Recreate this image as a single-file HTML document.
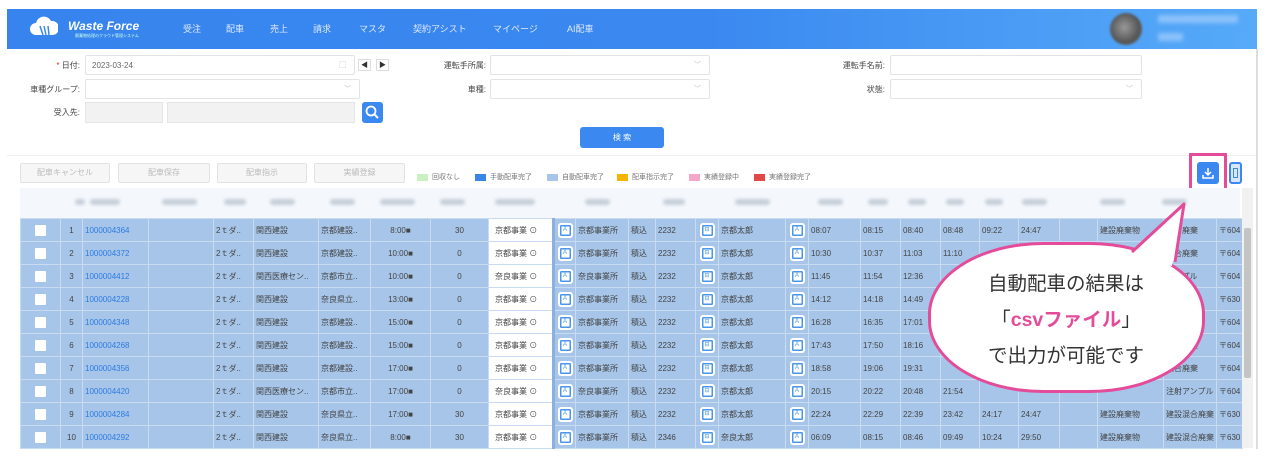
<!DOCTYPE html>
<html><head><meta charset="utf-8"><style>
*{margin:0;padding:0;box-sizing:border-box}
body{width:1275px;height:463px;background:#fff;font-family:"Liberation Sans","Noto Sans CJK JP",sans-serif;position:relative;overflow:hidden;color:#555}
.abs{position:absolute}
.hdr{left:7px;top:9px;width:1250px;height:40px;background:linear-gradient(90deg,#3784ee 0%,#3a88f0 55%,#56aaf8 100%)}
.nav{top:22px;font-size:9px;color:#dfeaff}
.lbl{font-size:8px;color:#444;text-align:right}
.inp{background:#fff;border:1px solid #e3e3e3;border-radius:2px}
.chev{position:absolute;right:8px;top:4px;font-size:7px;color:#bbb}
.btn{background:#f6f6f6;border:1px solid #e2e2e2;border-radius:2px;font-size:8px;color:#bbb;text-align:center;line-height:18px;top:163px;height:20px}
.lg{top:174px;width:11px;height:7px}
.lgt{top:172px;font-size:7px;color:#777}
table{position:absolute;left:20px;top:218px;border-collapse:collapse;table-layout:fixed;font-size:8px;color:#444}
td{height:23px;background:#a6c5e9;border:1px solid #c8dbf1;white-space:nowrap;overflow:hidden;padding:0 2px}
td.c{text-align:center}
td.id{color:#2e7be0}
td.w{background:#fff;border-right:3px solid #8ab0dd;font-size:8px;padding-left:6px}
.cb{display:inline-block;width:11px;height:11px;background:#fff;border-radius:1px;vertical-align:middle}
.ic{display:inline-block;width:15px;height:15px;background:#fff;border:2px solid #fff;box-shadow:inset 0 0 0 1.5px #4a95ee;border-radius:3px;vertical-align:middle;font-size:6px;color:#4a95ee;line-height:11px;text-align:center}
.hr{left:20px;top:188px;width:1220px;height:30px;background:#f4f8fd}
.hb{top:199px;height:6px;background:#c6ced8;border-radius:3px;filter:blur(1.5px)}
</style></head><body>
<div class="abs hdr"></div>
<div class="abs" style="left:30px;top:15px;width:28px;height:24px">
<svg width="28" height="24" viewBox="0 0 28 24"><path d="M6 20 a6 6 0 0 1 0-12 a8 8 0 0 1 15-2 a6 6 0 0 1 2 14 z" fill="#fff"/><path d="M10 11 l3 9 M14 11 l2 9 M18 11 l1 9" stroke="#3a88f0" stroke-width="1.5"/></svg></div>
<div class="abs" style="left:68px;top:19px;font-size:12px;font-weight:bold;color:#fff;font-style:italic">Waste Force</div>
<div class="abs" style="left:75px;top:33px;font-size:4px;color:#cfe">廃棄物処理のクラウド管理システム</div>
<div class="abs nav" style="left:183px">受注</div>
<div class="abs nav" style="left:226px">配車</div>
<div class="abs nav" style="left:270px">売上</div>
<div class="abs nav" style="left:313px">請求</div>
<div class="abs nav" style="left:359px">マスタ</div>
<div class="abs nav" style="left:413px">契約アシスト</div>
<div class="abs nav" style="left:493px">マイページ</div>
<div class="abs nav" style="left:567px">AI配車</div>
<div class="abs" style="left:1110px;top:13px;width:32px;height:32px;border-radius:50%;background:radial-gradient(circle at 45% 45%,#999,#555 60%,#777);filter:blur(1px)"></div>
<div class="abs" style="left:1158px;top:15px;width:80px;height:8px;background:#8cc2fb;filter:blur(2px)"></div>
<div class="abs" style="left:1158px;top:33px;width:25px;height:8px;background:#8cc2fb;filter:blur(2px)"></div>
<div class="abs" style="left:1256px;top:49px;width:2px;height:400px;background:#ddd"></div>

<div class="abs lbl" style="left:20px;top:60px;width:60px"><span style="color:#e33">*</span> 日付:</div>
<div class="abs inp" style="left:85px;top:55px;width:270px;height:20px"><span style="position:absolute;left:6px;top:5px;font-size:8px;color:#666">2023-03-24</span><span class="chev">▢</span></div>
<div class="abs" style="left:358px;top:59px;width:13px;height:12px;border:1px solid #ddd;font-size:7px;text-align:center;color:#333">◀</div>
<div class="abs" style="left:376px;top:59px;width:13px;height:12px;border:1px solid #ddd;font-size:7px;text-align:center;color:#333">▶</div>
<div class="abs lbl" style="left:400px;top:60px;width:86px">運転手所属:</div>
<div class="abs inp" style="left:490px;top:55px;width:220px;height:20px"><span class="chev">﹀</span></div>
<div class="abs lbl" style="left:800px;top:60px;width:85px">運転手名前:</div>
<div class="abs inp" style="left:890px;top:55px;width:252px;height:20px"></div>

<div class="abs lbl" style="left:10px;top:84px;width:70px">車種グループ:</div>
<div class="abs inp" style="left:85px;top:79px;width:275px;height:20px"><span class="chev">﹀</span></div>
<div class="abs lbl" style="left:400px;top:84px;width:86px">車種:</div>
<div class="abs inp" style="left:490px;top:79px;width:220px;height:20px"><span class="chev">﹀</span></div>
<div class="abs lbl" style="left:800px;top:84px;width:85px">状態:</div>
<div class="abs inp" style="left:890px;top:79px;width:252px;height:20px"><span class="chev">﹀</span></div>

<div class="abs lbl" style="left:20px;top:107px;width:60px">受入先:</div>
<div class="abs" style="left:85px;top:102px;width:78px;height:21px;background:#f2f2f2;border:1px solid #e5e5e5"></div>
<div class="abs" style="left:167px;top:102px;width:188px;height:21px;background:#f2f2f2;border:1px solid #e5e5e5"></div>
<div class="abs" style="left:362px;top:102px;width:21px;height:21px;background:#3a88f0;border-radius:3px"><svg width="21" height="21"><circle cx="9" cy="9" r="4.5" stroke="#fff" stroke-width="1.8" fill="none"/><path d="M12 12 l4 4" stroke="#fff" stroke-width="2"/></svg></div>
<div class="abs" style="left:580px;top:127px;width:84px;height:21px;background:#3a88f0;border-radius:3px;color:#fff;font-size:8px;text-align:center;line-height:21px">検 索</div>
<div class="abs" style="left:7px;top:155px;width:1249px;height:1px;background:#eee"></div>

<div class="abs btn" style="left:20px;width:90px">配車キャンセル</div>
<div class="abs btn" style="left:118px;width:92px">配車保存</div>
<div class="abs btn" style="left:217px;width:90px">配車指示</div>
<div class="abs btn" style="left:314px;width:91px">実績登録</div>
<div class="abs lg" style="left:417px;background:#c9f1c2"></div><div class="abs lgt" style="left:432px">回収なし</div>
<div class="abs lg" style="left:475px;background:#3a86e8"></div><div class="abs lgt" style="left:490px">手動配車完了</div>
<div class="abs lg" style="left:547px;background:#a6c5e9"></div><div class="abs lgt" style="left:562px">自動配車完了</div>
<div class="abs lg" style="left:617px;background:#f5b400"></div><div class="abs lgt" style="left:632px">配車指示完了</div>
<div class="abs lg" style="left:689px;background:#f6a6c6"></div><div class="abs lgt" style="left:704px">実績登録中</div>
<div class="abs lg" style="left:754px;background:#e34848"></div><div class="abs lgt" style="left:769px">実績登録完了</div>

<div class="abs" style="left:1197px;top:162px;width:22px;height:22px;background:#3a88f0;border-radius:3px"><svg width="22" height="22"><path d="M11 6 v7 M8 10 l3 3 3-3 M6 13 v3 h10 v-3" stroke="#fff" stroke-width="1.5" fill="none"/></svg></div>
<div class="abs" style="left:1229px;top:162px;width:13px;height:22px;border:2px solid #3a88f0;border-radius:3px;background:#d7e8fc"><div style="margin:4px auto;width:5px;height:10px;border:1px solid #3a88f0"></div></div>
<div class="abs" style="left:1189px;top:153px;width:38px;height:38px;border:3px solid #e44c9a"></div>

<div class="abs hr"></div>
<div class="abs hb" style="left:75px;width:10px"></div><div class="abs hb" style="left:90px;width:30px"></div>
<div class="abs hb" style="left:162px;width:35px"></div><div class="abs hb" style="left:224px;width:22px"></div>
<div class="abs hb" style="left:270px;width:25px"></div><div class="abs hb" style="left:330px;width:25px"></div>
<div class="abs hb" style="left:380px;width:35px"></div><div class="abs hb" style="left:440px;width:25px"></div>
<div class="abs hb" style="left:495px;width:40px"></div><div class="abs hb" style="left:585px;width:25px"></div>
<div class="abs hb" style="left:663px;width:22px"></div><div class="abs hb" style="left:735px;width:35px"></div>
<div class="abs hb" style="left:818px;width:25px"></div><div class="abs hb" style="left:868px;width:20px"></div>
<div class="abs hb" style="left:908px;width:18px"></div><div class="abs hb" style="left:946px;width:18px"></div>
<div class="abs hb" style="left:985px;width:18px"></div><div class="abs hb" style="left:1022px;width:25px"></div>
<div class="abs hb" style="left:1100px;width:25px"></div><div class="abs hb" style="left:1162px;width:25px"></div>

<table>
<colgroup><col style="width:40px"><col style="width:22px"><col style="width:66px"><col style="width:65px"><col style="width:40px"><col style="width:65px"><col style="width:52px"><col style="width:60px"><col style="width:58px"><col style="width:65px"><col style="width:22px"><col style="width:53px"><col style="width:27px"><col style="width:40px"><col style="width:23px"><col style="width:67px"><col style="width:23px"><col style="width:52px"><col style="width:40px"><col style="width:40px"><col style="width:39px"><col style="width:39px"><col style="width:41px"><col style="width:38px"><col style="width:66px"><col style="width:53px"><col style="width:24px"></colgroup>
<tr><td class="c"><span class="cb"></span></td><td class="c">1</td><td class="id">1000004364</td><td></td><td>2ｔダ..</td><td>関西建設</td><td>京都建設..</td><td class="c">8:00■</td><td class="c">30</td><td class="w">京都事業 ⊙</td><td class="c"><span class="ic">A</span></td><td>京都事業所</td><td>積込</td><td>2232</td><td class="c"><span class="ic">⊟</span></td><td>京都太郎</td><td class="c"><span class="ic">A</span></td><td>08:07</td><td>08:15</td><td>08:40</td><td>08:48</td><td>09:22</td><td>24:47</td><td></td><td>建設廃棄物</td><td>混合廃棄</td><td>〒604</td></tr>
<tr><td class="c"><span class="cb"></span></td><td class="c">2</td><td class="id">1000004372</td><td></td><td>2ｔダ..</td><td>関西建設</td><td>京都建設..</td><td class="c">10:00■</td><td class="c">0</td><td class="w">京都事業 ⊙</td><td class="c"><span class="ic">A</span></td><td>京都事業所</td><td>積込</td><td>2232</td><td class="c"><span class="ic">⊟</span></td><td>京都太郎</td><td class="c"><span class="ic">A</span></td><td>10:30</td><td>10:37</td><td>11:03</td><td>11:10</td><td></td><td></td><td></td><td></td><td>混合廃棄</td><td>〒604</td></tr>
<tr><td class="c"><span class="cb"></span></td><td class="c">3</td><td class="id">1000004412</td><td></td><td>2ｔダ..</td><td>関西医療セン..</td><td>京都市立..</td><td class="c">10:00■</td><td class="c">0</td><td class="w">奈良事業 ⊙</td><td class="c"><span class="ic">A</span></td><td>奈良事業所</td><td>積込</td><td>2232</td><td class="c"><span class="ic">⊟</span></td><td>京都太郎</td><td class="c"><span class="ic">A</span></td><td>11:45</td><td>11:54</td><td>12:36</td><td></td><td></td><td></td><td></td><td></td><td>アンプル</td><td>〒604</td></tr>
<tr><td class="c"><span class="cb"></span></td><td class="c">4</td><td class="id">1000004228</td><td></td><td>2ｔダ..</td><td>関西建設</td><td>奈良県立..</td><td class="c">13:00■</td><td class="c">0</td><td class="w">京都事業 ⊙</td><td class="c"><span class="ic">A</span></td><td>京都事業所</td><td>積込</td><td>2232</td><td class="c"><span class="ic">⊟</span></td><td>京都太郎</td><td class="c"><span class="ic">A</span></td><td>14:12</td><td>14:18</td><td>14:49</td><td></td><td></td><td></td><td></td><td></td><td>混合廃棄</td><td>〒630</td></tr>
<tr><td class="c"><span class="cb"></span></td><td class="c">5</td><td class="id">1000004348</td><td></td><td>2ｔダ..</td><td>関西建設</td><td>京都建設..</td><td class="c">15:00■</td><td class="c">0</td><td class="w">京都事業 ⊙</td><td class="c"><span class="ic">A</span></td><td>京都事業所</td><td>積込</td><td>2232</td><td class="c"><span class="ic">⊟</span></td><td>京都太郎</td><td class="c"><span class="ic">A</span></td><td>16:28</td><td>16:35</td><td>17:01</td><td></td><td></td><td></td><td></td><td></td><td>混合廃棄</td><td>〒604</td></tr>
<tr><td class="c"><span class="cb"></span></td><td class="c">6</td><td class="id">1000004268</td><td></td><td>2ｔダ..</td><td>関西建設</td><td>京都建設..</td><td class="c">15:00■</td><td class="c">0</td><td class="w">京都事業 ⊙</td><td class="c"><span class="ic">A</span></td><td>京都事業所</td><td>積込</td><td>2232</td><td class="c"><span class="ic">⊟</span></td><td>京都太郎</td><td class="c"><span class="ic">A</span></td><td>17:43</td><td>17:50</td><td>18:16</td><td></td><td></td><td></td><td></td><td></td><td>混合廃棄</td><td>〒604</td></tr>
<tr><td class="c"><span class="cb"></span></td><td class="c">7</td><td class="id">1000004356</td><td></td><td>2ｔダ..</td><td>関西建設</td><td>京都建設..</td><td class="c">17:00■</td><td class="c">0</td><td class="w">京都事業 ⊙</td><td class="c"><span class="ic">A</span></td><td>京都事業所</td><td>積込</td><td>2232</td><td class="c"><span class="ic">⊟</span></td><td>京都太郎</td><td class="c"><span class="ic">A</span></td><td>18:58</td><td>19:06</td><td>19:31</td><td></td><td></td><td></td><td></td><td></td><td>混合廃棄</td><td>〒604</td></tr>
<tr><td class="c"><span class="cb"></span></td><td class="c">8</td><td class="id">1000004420</td><td></td><td>2ｔダ..</td><td>関西医療セン..</td><td>京都市立..</td><td class="c">17:00■</td><td class="c">0</td><td class="w">奈良事業 ⊙</td><td class="c"><span class="ic">A</span></td><td>奈良事業所</td><td>積込</td><td>2232</td><td class="c"><span class="ic">⊟</span></td><td>京都太郎</td><td class="c"><span class="ic">A</span></td><td>20:15</td><td>20:22</td><td>20:48</td><td>21:54</td><td></td><td></td><td></td><td></td><td>注射アンプル</td><td>〒604</td></tr>
<tr><td class="c"><span class="cb"></span></td><td class="c">9</td><td class="id">1000004284</td><td></td><td>2ｔダ..</td><td>関西建設</td><td>奈良県立..</td><td class="c">17:00■</td><td class="c">30</td><td class="w">京都事業 ⊙</td><td class="c"><span class="ic">A</span></td><td>京都事業所</td><td>積込</td><td>2232</td><td class="c"><span class="ic">⊟</span></td><td>京都太郎</td><td class="c"><span class="ic">A</span></td><td>22:24</td><td>22:29</td><td>22:39</td><td>23:42</td><td>24:17</td><td>24:47</td><td></td><td>建設廃棄物</td><td>建設混合廃棄</td><td>〒630</td></tr>
<tr><td class="c"><span class="cb"></span></td><td class="c">10</td><td class="id">1000004292</td><td></td><td>2ｔダ..</td><td>関西建設</td><td>奈良県立..</td><td class="c">8:00■</td><td class="c">30</td><td class="w">京都事業 ⊙</td><td class="c"><span class="ic">A</span></td><td>京都事業所</td><td>積込</td><td>2346</td><td class="c"><span class="ic">⊟</span></td><td>奈良太郎</td><td class="c"><span class="ic">A</span></td><td>06:09</td><td>08:15</td><td>08:46</td><td>09:49</td><td>10:24</td><td>29:50</td><td></td><td>建設廃棄物</td><td>建設混合廃棄</td><td>〒630</td></tr>
</table>
<div class="abs" style="left:1242px;top:188px;width:11px;height:260px;background:#f1f1f1"></div>
<div class="abs" style="left:1244px;top:228px;width:7px;height:150px;background:#c4c4c4;border-radius:2px"></div>

<div class="abs" style="left:928px;top:242px;width:277px;height:151px;background:#fff;border:3px solid #e44c9a;border-radius:115px / 72px"></div>
<svg class="abs" style="left:0;top:0" width="1275" height="463">
<path d="M1132 252 L1184 204 L1175 262" fill="#fff" stroke="#e44c9a" stroke-width="3" stroke-linejoin="round"/>
<path d="M1128 258 L1181 212 L1172 266 Z" fill="#fff"/>
</svg>
<div class="abs" style="left:928px;top:266px;width:276px;text-align:center;font-size:19.5px;color:#333;line-height:36px">自動配車の結果は<br>「<b style="color:#e44c9a">csvファイル</b>」<br>で出力が可能です</div>
</body></html>
